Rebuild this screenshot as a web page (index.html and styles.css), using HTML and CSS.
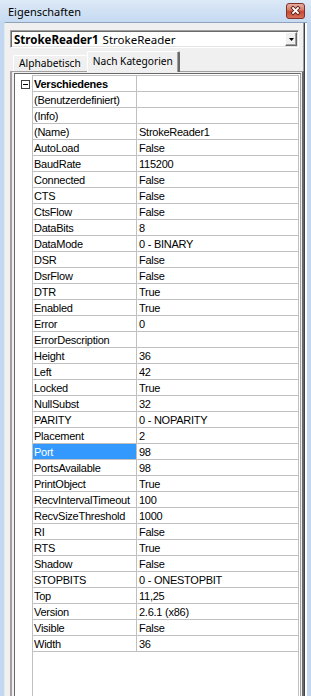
FILE: index.html
```html
<!DOCTYPE html>
<html lang="de">
  <head>
    <meta charset="UTF-8" />
    <meta name="viewport" content="width=device-width, initial-scale=1.0" />
    <title>Eigenschaften</title>
    <link rel="stylesheet" href="styles.css">
  </head>
  <body>
    <div class="window">
      <div class="titlebar">
        <span class="title">Eigenschaften</span>
        <span class="close-btn">
          <svg width="19" height="16" viewBox="0 0 19 16">
            <defs>
              <linearGradient id="closeGrad" x1="0" y1="0" x2="0" y2="1">
                <stop offset="0" stop-color="#eab3a6" />
                <stop offset="0.45" stop-color="#d77a66" />
                <stop offset="0.5" stop-color="#c8472f" />
                <stop offset="1" stop-color="#d9735a" />
              </linearGradient>
            </defs>
            <rect x="0.5" y="0.5" width="18" height="15" rx="2.5" fill="url(#closeGrad)" stroke="#7d342a" />
            <path d="M7 5 L12 10 M12 5 L7 10" stroke="#5a2219" stroke-width="3.6" stroke-linecap="square" />
            <path d="M7 5 L12 10 M12 5 L7 10" stroke="#ffffff" stroke-width="1.8" stroke-linecap="square" />
          </svg>
        </span>
      </div>

      <div class="client">
        <div class="combo">
          <span class="combo-text"><b>StrokeReader1</b> StrokeReader</span>
          <span class="combo-btn">
            <svg width="5" height="3" viewBox="0 0 5 3"><path d="M0 0 H5 L2.5 3 Z" fill="#000" /></svg>
          </span>
        </div>

        <div class="tabs">
          <div class="tab">Alphabetisch</div>
          <div class="tab active">Nach Kategorien</div>
        </div>

        <div class="page">
          <div class="grid">
            <div class="gutter">
              <span class="expander">
                <svg width="9" height="9" viewBox="0 0 9 9">
                  <rect x="0.5" y="0.5" width="8" height="8" fill="#fff" stroke="#404040" />
                  <path d="M2 4.5 H7" stroke="#000" />
                </svg>
              </span>
            </div>
            <div class="sheet">
              <div class="row category"><span class="name">Verschiedenes</span><span class="value"></span></div>
              <div class="row"><span class="name">(Benutzerdefiniert)</span><span class="value"></span></div>
              <div class="row"><span class="name">(Info)</span><span class="value"></span></div>
              <div class="row"><span class="name">(Name)</span><span class="value">StrokeReader1</span></div>
              <div class="row"><span class="name">AutoLoad</span><span class="value">False</span></div>
              <div class="row"><span class="name">BaudRate</span><span class="value">115200</span></div>
              <div class="row"><span class="name">Connected</span><span class="value">False</span></div>
              <div class="row"><span class="name">CTS</span><span class="value">False</span></div>
              <div class="row"><span class="name">CtsFlow</span><span class="value">False</span></div>
              <div class="row"><span class="name">DataBits</span><span class="value">8</span></div>
              <div class="row"><span class="name">DataMode</span><span class="value">0 - BINARY</span></div>
              <div class="row"><span class="name">DSR</span><span class="value">False</span></div>
              <div class="row"><span class="name">DsrFlow</span><span class="value">False</span></div>
              <div class="row"><span class="name">DTR</span><span class="value">True</span></div>
              <div class="row"><span class="name">Enabled</span><span class="value">True</span></div>
              <div class="row"><span class="name">Error</span><span class="value">0</span></div>
              <div class="row"><span class="name">ErrorDescription</span><span class="value"></span></div>
              <div class="row"><span class="name">Height</span><span class="value">36</span></div>
              <div class="row"><span class="name">Left</span><span class="value">42</span></div>
              <div class="row"><span class="name">Locked</span><span class="value">True</span></div>
              <div class="row"><span class="name">NullSubst</span><span class="value">32</span></div>
              <div class="row"><span class="name">PARITY</span><span class="value">0 - NOPARITY</span></div>
              <div class="row"><span class="name">Placement</span><span class="value">2</span></div>
              <div class="row selected"><span class="name">Port</span><span class="value">98</span></div>
              <div class="row"><span class="name">PortsAvailable</span><span class="value">98</span></div>
              <div class="row"><span class="name">PrintObject</span><span class="value">True</span></div>
              <div class="row"><span class="name">RecvIntervalTimeout</span><span class="value">100</span></div>
              <div class="row"><span class="name">RecvSizeThreshold</span><span class="value">1000</span></div>
              <div class="row"><span class="name">RI</span><span class="value">False</span></div>
              <div class="row"><span class="name">RTS</span><span class="value">True</span></div>
              <div class="row"><span class="name">Shadow</span><span class="value">False</span></div>
              <div class="row"><span class="name">STOPBITS</span><span class="value">0 - ONESTOPBIT</span></div>
              <div class="row"><span class="name">Top</span><span class="value">11,25</span></div>
              <div class="row"><span class="name">Version</span><span class="value">2.6.1 (x86)</span></div>
              <div class="row"><span class="name">Visible</span><span class="value">False</span></div>
              <div class="row"><span class="name">Width</span><span class="value">36</span></div>
            </div>
          </div>
        </div>
      </div>
    </div>
  </body>
</html>
```

FILE: styles.css
```css
body {
  margin: 0;
  background: #c4d8ef;
  font-family: "Noto Sans", "Open Sans", sans-serif;
}
.window {
  width: 311px;
  height: 696px;
  overflow: hidden;
  display: flex;
  flex-direction: column;
  background: #c3d8f0;
}
.titlebar {
  height: 22px;
  flex: none;
  display: flex;
  align-items: center;
  justify-content: space-between;
  padding: 0 6px 0 8px;
  background: linear-gradient(#dce9f7, #c6daf1);
}
.title {
  font-size: 11px;
  color: #000;
}
.close-btn {
  display: flex;
}
.client {
  flex: 1;
  margin: 0 4px;
  padding-top: 7px;
  display: flex;
  flex-direction: column;
  background: #f0f0f0;
  border-top: 1px solid #8ea2bd;
  border-left: 1px solid #dfe7f1;
  box-shadow: inset -2px 0 #ffffff, inset -3px 0 #404040, inset -4px 0 #a0a0a0;
  min-height: 0;
}

/* object selector */
.combo {
  width: 287px;
  height: 16px;
  margin-left: 5px;
  display: flex;
  align-items: center;
  background: #fff;
  border: 1px solid;
  border-color: #a0a0a0 #ffffff #ffffff #a0a0a0;
  box-shadow: inset 1px 1px #696969, inset -1px -1px #e3e3e3;
}
.combo-text {
  flex: 1;
  padding-left: 3px;
  font-size: 11.5px;
  white-space: nowrap;
}
.combo-text b {
  font-weight: bold;
  margin-right: 1px;
}
.combo-btn {
  width: 10px;
  height: 12px;
  margin-right: 1px;
  display: flex;
  align-items: center;
  justify-content: center;
  background: #f0f0f0;
  border: 1px solid;
  border-color: #ffffff #696969 #696969 #ffffff;
  box-shadow: inset -1px -1px #a0a0a0;
}

/* tabs */
.tabs {
  height: 21px;
  margin-top: 2px;
  padding-left: 8px;
  display: flex;
  align-items: flex-end;
  font-size: 10.2px;
}
.tab {
  height: 15px;
  padding: 0 5px;
  line-height: 15px;
  border: 1px solid;
  border-color: #ffffff transparent transparent #ffffff;
  border-bottom: none;
  border-radius: 2px 0 0 0;
  white-space: nowrap;
}
.tab.active {
  position: relative;
  height: 20px;
  margin-bottom: -1px;
  padding: 0 5px;
  line-height: 18px;
  background: #f0f0f0;
  border-right: 2px solid #696969;
  border-radius: 2px 2px 0 0;
  box-shadow: inset -1px 0 #a0a0a0;
}

/* property grid */
.page {
  flex: 1;
  width: 287px;
  margin-left: 5px;
  padding: 1px 1px 0 2px;
  display: flex;
  border-top: 1px solid #a0a0a0;
  border-left: 2px solid #a0a0a0;
  border-right: 2px solid #696969;
  min-height: 0;
}
.grid {
  flex: 1;
  display: flex;
  padding: 1px 1px 0 0;
  background: #fff;
  border-top: 1px solid #696969;
  border-left: 1px solid #696969;
  border-right: 1px solid #a0a0a0;
  font-family: "Liberation Sans", Arial, sans-serif;
  font-size: 11px;
  letter-spacing: -0.25px;
  color: #000;
}
.gutter {
  width: 17px;
  flex: none;
}
.expander {
  display: block;
  width: 9px;
  height: 9px;
  margin: 5px 0 0 6px;
}
.expander svg {
  display: block;
}
.sheet {
  flex: 1;
  border-top: 1px solid #c0c0c0;
  border-left: 1px solid #c0c0c0;
  border-right: 1px solid #c0c0c0;
}
.row {
  display: grid;
  grid-template-columns: 104px 1fr;
  height: 15px;
  border-bottom: 1px solid #c0c0c0;
  white-space: nowrap;
}
.row .name,
.row .value {
  height: 15px;
  line-height: 16px;
  overflow: hidden;
}
.row .name {
  padding-left: 1px;
  border-right: 1px solid #c0c0c0;
}
.row .value {
  padding-left: 2px;
}
.category .name {
  font-weight: bold;
}
.selected .name {
  background: #3399ff;
  color: #fff;
}
```
